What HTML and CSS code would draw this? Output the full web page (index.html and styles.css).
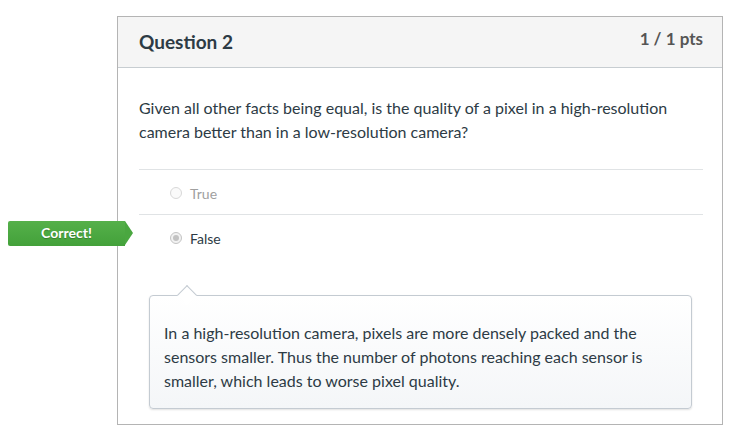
FILE: index.html
```html
<!DOCTYPE html>
<html>
<head>
<meta charset="utf-8">
<link rel="stylesheet" href="styles.css">
</head>
<body>
<div class="page">
  <div class="card">
    <div class="card-header">
      <h2 class="title">Question 2</h2>
      <span class="pts">1 / 1 pts</span>
    </div>
    <div class="card-body">
      <p class="question">Given all other facts being equal, is the quality of a pixel in a high-resolution camera better than in a low-resolution camera?</p>
      <div class="answers">
        <div class="answer">
          <span class="radio"></span>
          <span class="label muted">True</span>
        </div>
        <div class="answer selected">
          <span class="badge">Correct!</span>
          <span class="radio checked"></span>
          <span class="label">False</span>
        </div>
      </div>
      <div class="feedback">
        <p>In a high-resolution camera, pixels are more densely packed and the sensors smaller. Thus the number of photons reaching each sensor is smaller, which leads to worse pixel quality.</p>
      </div>
    </div>
  </div>
</div>
</body>
</html>
```

FILE: styles.css
```css
html, body {
  margin: 0;
  padding: 0;
  background: #ffffff;
}
body {
  font-family: Lato, "Open Sans", sans-serif;
  color: #2d3b45;
}
.page {
  padding: 16px 0 0 117px;
}
.card {
  width: 604px;
  height: 407px;
  border: 1px solid #b4b4b4;
  box-sizing: content-box;
  position: relative;
}
.card-header {
  height: 50px;
  background: #f5f5f5;
  border-bottom: 1px solid #c7cdd1;
  display: flex;
  justify-content: space-between;
  align-items: flex-start;
  padding: 0 19px 0 21px;
}
.title {
  margin: 0;
  padding-top: 13px;
  font-size: 19px;
  font-weight: 700;
  color: #2d3b45;
  line-height: 24px;
}
.pts {
  padding-top: 12px;
  font-size: 17px;
  font-weight: 700;
  color: #555555;
  line-height: 20px;
}
.card-body {
  padding: 28px 19px 0 21px;
}
.question {
  margin: 0 0 25px 0;
  font-size: 16px;
  line-height: 24px;
  color: #2d3b45;
}
.answers {
  border-top: 1px solid #e0e3e5;
}
.answer {
  position: relative;
  height: 42px;
  padding-top: 2px;
  display: flex;
  align-items: center;
  padding-left: 31px;
}
.answer + .answer {
  border-top: 1px solid #e0e3e5;
}
.radio {
  width: 12px;
  height: 12px;
  border-radius: 50%;
  border: 1px solid #d8d8d8;
  background: #fafafa;
  box-sizing: border-box;
  margin-right: 8px;
  position: relative;
}
.radio.checked {
  border-color: #c4c4c4;
  background: #f2f2f2;
}
.radio.checked::after {
  content: "";
  position: absolute;
  left: 2px;
  top: 2px;
  width: 6px;
  height: 6px;
  border-radius: 50%;
  background: #c2c2c2;
}
.label {
  font-size: 14px;
  color: #2d3b45;
}
.label.muted {
  color: #a0a0a0;
}
.badge {
  position: absolute;
  left: -131px;
  top: 6px;
  width: 117px;
  height: 25px;
  background: linear-gradient(#55b04a, #43a13a);
  border-radius: 2px 0 0 2px;
  color: #ffffff;
  font-size: 14px;
  font-weight: 700;
  line-height: 24px;
  text-align: center;
  box-sizing: border-box;
  text-shadow: 0 1px 1px rgba(0,0,0,0.25);
}
.badge::after {
  content: "";
  position: absolute;
  right: -8px;
  top: 0;
  border-top: 12.5px solid transparent;
  border-bottom: 12.5px solid transparent;
  border-left: 8px solid #4aa740;
}
.feedback {
  position: relative;
  margin: 36px 11px 0 10px;
  border: 1px solid #c4cbd2;
  border-radius: 4px;
  background: linear-gradient(#ffffff, #f4f6f8);
  box-shadow: 0 1px 2px rgba(0,0,0,0.12);
  padding: 25px 14px 15px 14px;
}
.feedback::before {
  content: "";
  position: absolute;
  left: 30px;
  top: -8px;
  width: 14px;
  height: 14px;
  background: #ffffff;
  border-top: 1px solid #c4cbd2;
  border-left: 1px solid #c4cbd2;
  transform: rotate(45deg);
  box-sizing: border-box;
}
.feedback p {
  margin: 0;
  font-size: 16px;
  line-height: 24px;
  color: #2d3b45;
}
```
